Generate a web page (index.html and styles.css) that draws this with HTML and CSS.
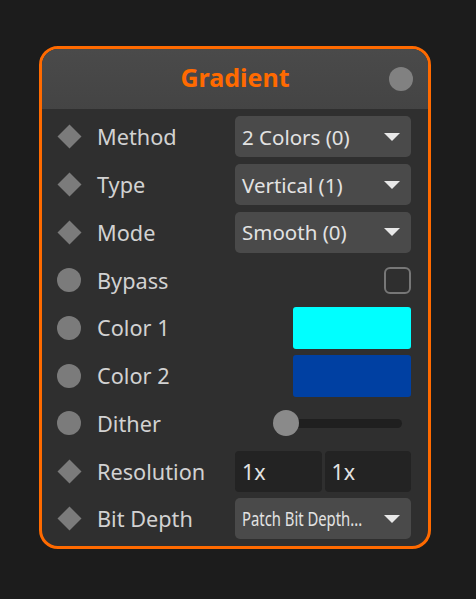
FILE: index.html
```html
<!DOCTYPE html>
<html>
<head>
<meta charset="utf-8">
<link rel="stylesheet" href="styles.css">
</head>
<body>
<div class="node">
  <div class="header">
    <span></span>
    <span class="title">Gradient</span>
    <span class="dot"></span>
  </div>
  <div class="body">
    <div class="row">
      <span class="pin diamond"></span><span class="label">Method</span>
      <div class="ctrl"><div class="select"><span>2 Colors (0)</span><span class="arrow"></span></div></div>
    </div>
    <div class="row">
      <span class="pin diamond"></span><span class="label">Type</span>
      <div class="ctrl"><div class="select"><span>Vertical (1)</span><span class="arrow"></span></div></div>
    </div>
    <div class="row">
      <span class="pin diamond"></span><span class="label">Mode</span>
      <div class="ctrl"><div class="select"><span>Smooth (0)</span><span class="arrow"></span></div></div>
    </div>
    <div class="row">
      <span class="pin circle"></span><span class="label">Bypass</span>
      <div class="ctrl end"><span class="check"></span></div>
    </div>
    <div class="row">
      <span class="pin circle"></span><span class="label">Color 1</span>
      <div class="ctrl end"><span class="swatch cyan"></span></div>
    </div>
    <div class="row">
      <span class="pin circle"></span><span class="label">Color 2</span>
      <div class="ctrl end"><span class="swatch blue"></span></div>
    </div>
    <div class="row">
      <span class="pin circle"></span><span class="label">Dither</span>
      <div class="ctrl end"><div class="slider"><span class="track"></span><span class="knob"></span></div></div>
    </div>
    <div class="row">
      <span class="pin diamond"></span><span class="label">Resolution</span>
      <div class="ctrl pair"><span class="input">1x</span><span class="input">1x</span></div>
    </div>
    <div class="row">
      <span class="pin diamond"></span><span class="label">Bit Depth</span>
      <div class="ctrl"><div class="select"><span class="cond">Patch Bit Depth...</span><span class="arrow"></span></div></div>
    </div>
  </div>
</div>
</body>
</html>
```
FILE: styles.css
```css
* { box-sizing: border-box; }
html, body { margin: 0; padding: 0; }
body {
  background: #1c1c1c;
  width: 476px;
  height: 599px;
  overflow: hidden;
  font-family: "Noto Sans", "Open Sans", sans-serif;
  padding: 46px 0 0 39px;
}
.node {
  width: 392px;
  height: 503px;
  border: 3px solid #ff6a00;
  border-radius: 19px;
  background: #2f2f2f;
  overflow: hidden;
}
.header {
  height: 60px;
  background: linear-gradient(#4a4a4a, #444444);
  display: grid;
  grid-template-columns: 1fr auto 1fr;
  align-items: center;
  padding: 0 15px;
}
.title {
  color: #ff6a00;
  font-weight: 700;
  font-size: 25px;
  line-height: 1;
  margin-top: -3px;
}
.dot {
  justify-self: end;
  width: 24px;
  height: 24px;
  border-radius: 50%;
  background: #818181;
}
.body {
  padding: 4px 17px 0 15px;
  display: flex;
  flex-direction: column;
}
.row {
  height: 47.75px;
  display: flex;
  align-items: center;
}
.pin {
  width: 24px;
  height: 24px;
  flex: none;
  display: flex;
  align-items: center;
  justify-content: center;
}
.pin.circle::before {
  content: "";
  width: 24px;
  height: 24px;
  border-radius: 50%;
  background: #7b7b7b;
}
.pin.diamond::before {
  content: "";
  width: 17px;
  height: 17px;
  background: #7b7b7b;
  transform: rotate(45deg);
}
.label {
  margin-left: 16px;
  color: #d2d2d2;
  font-size: 21.7px;
  width: 138px;
  white-space: nowrap;
}
.ctrl {
  width: 176px;
  height: 41px;
  display: flex;
  align-items: center;
}
.ctrl.end { justify-content: flex-end; }
.select {
  width: 100%;
  height: 41px;
  background: #4a4a4a;
  border-radius: 5px;
  display: flex;
  align-items: center;
  justify-content: space-between;
  padding: 0 11px 0 7px;
  color: #e2e2e2;
  font-size: 20.5px;
  white-space: nowrap;
}
.arrow {
  width: 0;
  height: 0;
  border-left: 8px solid transparent;
  border-right: 8px solid transparent;
  border-top: 8px solid #e8e8e8;
}
.cond {
  display: inline-block;
  font-size: 19px;
  transform: scaleX(0.78);
  transform-origin: left center;
  width: 120px;
}
.check {
  width: 27px;
  height: 27px;
  border: 2px solid #777;
  border-radius: 6px;
}
.swatch {
  width: 118px;
  height: 42px;
  border-radius: 3px;
}
.swatch.cyan { background: #00ffff; }
.swatch.blue { background: #0040a2; }
.slider {
  position: relative;
  width: 129px;
  height: 26px;
  margin-right: 9px;
  display: flex;
  align-items: center;
}
.track {
  display: block;
  width: 100%;
  height: 9px;
  margin-left: 13px;
  border-radius: 5px;
  background: #1f1f1f;
}
.knob {
  position: absolute;
  left: 0;
  top: 0;
  width: 26px;
  height: 26px;
  border-radius: 50%;
  background: #8a8a8a;
}
.ctrl.pair { gap: 3px; }
.input {
  flex: 1;
  height: 41px;
  background: #232323;
  border-radius: 4px;
  color: #e2e2e2;
  font-size: 21.5px;
  display: flex;
  align-items: center;
  padding-left: 7px;
}
```
